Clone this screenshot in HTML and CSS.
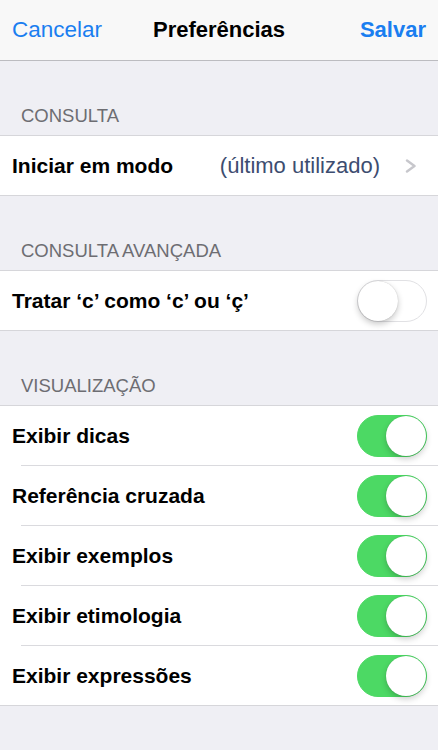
FILE: index.html
```html
<!DOCTYPE html>
<html lang="pt">
<head>
<meta charset="utf-8">
<title>Preferências</title>
<link rel="stylesheet" href="styles.css">
</head>
<body>
<header class="nav">
  <span class="nav-btn">Cancelar</span>
  <span class="nav-title">Preferências</span>
  <span class="nav-btn nav-save">Salvar</span>
</header>

<div class="sec-head"><span>CONSULTA</span></div>
<div class="group">
  <div class="row">
    <span class="label">Iniciar em modo</span>
    <span class="detail">(último utilizado)</span>
    <svg class="chev" width="12" height="14" viewBox="0 0 12 14"><polyline points="2,1.5 9.5,7 2,12.5" fill="none" stroke="#c7c7cc" stroke-width="2.4" stroke-linecap="round" stroke-linejoin="round"/></svg>
  </div>
</div>

<div class="sec-head"><span>CONSULTA AVANÇADA</span></div>
<div class="group">
  <div class="row">
    <span class="label">Tratar ‘c’ como ‘c’ ou ‘ç’</span>
    <span class="switch"><span class="knob"></span></span>
  </div>
</div>

<div class="sec-head"><span>VISUALIZAÇÃO</span></div>
<div class="group">
  <div class="row">
    <span class="label">Exibir dicas</span>
    <span class="switch on"><span class="knob"></span></span>
  </div>
  <div class="sep"></div>
  <div class="row">
    <span class="label">Referência cruzada</span>
    <span class="switch on"><span class="knob"></span></span>
  </div>
  <div class="sep"></div>
  <div class="row">
    <span class="label">Exibir exemplos</span>
    <span class="switch on"><span class="knob"></span></span>
  </div>
  <div class="sep"></div>
  <div class="row">
    <span class="label">Exibir etimologia</span>
    <span class="switch on"><span class="knob"></span></span>
  </div>
  <div class="sep"></div>
  <div class="row">
    <span class="label">Exibir expressões</span>
    <span class="switch on"><span class="knob"></span></span>
  </div>
</div>
</body>
</html>
```

FILE: styles.css
```css
* { box-sizing: border-box; }

html, body {
  margin: 0;
  padding: 0;
}

body {
  background: #efeff4;
  font-family: "Liberation Sans", Arial, sans-serif;
  color: #000;
  width: 438px;
  min-height: 750px;
}

.nav {
  height: 61px;
  background: #f8f8f8;
  border-bottom: 1px solid #bcbcc0;
  display: grid;
  grid-template-columns: 1fr auto 1fr;
  align-items: center;
  padding: 0 12px;
}

.nav-btn {
  color: #1a7ef0;
  font-size: 22.5px;
}

.nav-save {
  font-weight: bold;
  font-size: 22px;
  justify-self: end;
}

.nav-title {
  font-weight: bold;
  font-size: 22px;
}

.sec-head {
  height: 74px;
  display: flex;
  align-items: flex-end;
  padding: 0 0 8px 21px;
  color: #6d6d72;
  font-size: 18.5px;
  line-height: 22px;
}

.group {
  background: #fff;
  border-top: 1px solid #d6d6da;
  border-bottom: 1px solid #d6d6da;
}

.row {
  height: 59px;
  display: flex;
  align-items: center;
  padding: 0 11px 0 12px;
}

.label {
  font-weight: bold;
  font-size: 21px;
  flex: 1;
  white-space: nowrap;
}

.detail {
  color: #3d4d70;
  font-size: 22px;
  margin-right: 25px;
}

.chev {
  margin-right: 10px;
  margin-top: 1px;
}

.sep {
  height: 1px;
  margin-left: 21px;
  background: #dadade;
}

.switch {
  width: 70px;
  height: 42px;
  border-radius: 21px;
  background: #fff;
  border: 1.5px solid #e1e1e4;
  display: flex;
  align-items: center;
  justify-content: flex-start;
  padding: 0;
}

.switch .knob {
  width: 40px;
  height: 40px;
  border-radius: 50%;
  background: #fff;
  box-shadow: 0 3px 6px rgba(0, 0, 0, 0.22), 0 0 1px rgba(0, 0, 0, 0.25);
}

.switch.on {
  background: #4cd964;
  border: 1px solid #4cd964;
  justify-content: flex-end;
}

.switch.on .knob {
  box-shadow: 0 3px 6px rgba(0, 0, 0, 0.2), 0 0 1px rgba(0, 0, 0, 0.2);
}
```
